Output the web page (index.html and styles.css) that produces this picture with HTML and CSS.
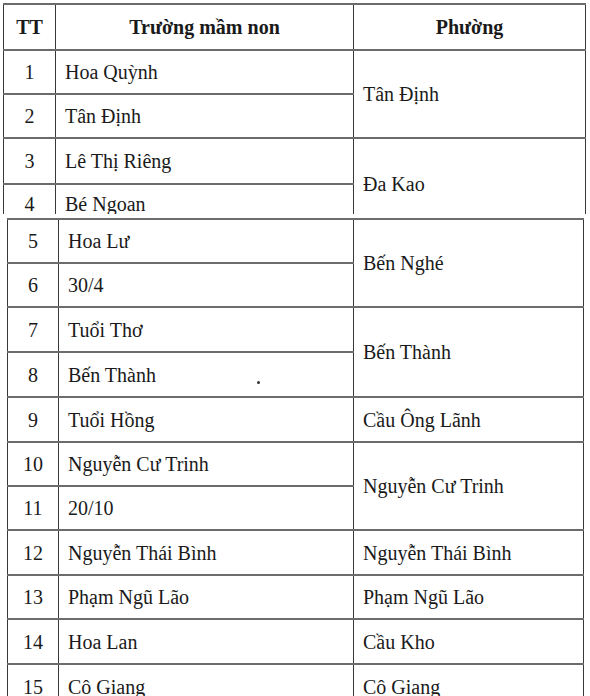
FILE: index.html
```html
<!DOCTYPE html>
<html lang="vi">
<head>
<meta charset="utf-8">
<title>Danh sách trường mầm non</title>
<link rel="stylesheet" href="styles.css">
</head>
<body>
<div class="page">
  <div class="piece piece-top">
    <table class="grid grid-top">
      <colgroup>
        <col class="c-tt-top">
        <col class="c-name-top">
        <col class="c-ward-top">
      </colgroup>
      <tr class="head">
        <th>TT</th>
        <th>Trường mầm non</th>
        <th>Phường</th>
      </tr>
      <tr class="r44">
        <td class="num">1</td>
        <td>Hoa Quỳnh</td>
        <td rowspan="2">Tân Định</td>
      </tr>
      <tr class="r44">
        <td class="num">2</td>
        <td>Tân Định</td>
      </tr>
      <tr class="r46">
        <td class="num">3</td>
        <td>Lê Thị Riêng</td>
        <td rowspan="2">Đa Kao</td>
      </tr>
      <tr class="r46 cut-row">
        <td class="num">4</td>
        <td>Bé Ngoan</td>
      </tr>
    </table>
  </div>
  <div class="piece piece-bottom">
    <table class="grid grid-bottom">
      <colgroup>
        <col class="c-tt-bot">
        <col class="c-name-bot">
        <col class="c-ward-bot">
      </colgroup>
      <tr class="r44">
        <td class="num">5</td>
        <td>Hoa Lư</td>
        <td rowspan="2">Bến Nghé</td>
      </tr>
      <tr class="r44">
        <td class="num">6</td>
        <td>30/4</td>
      </tr>
      <tr class="r45">
        <td class="num">7</td>
        <td>Tuổi Thơ</td>
        <td rowspan="2">Bến Thành</td>
      </tr>
      <tr class="r45">
        <td class="num">8</td>
        <td class="speck-cell">Bến Thành<span class="speck"></span></td>
      </tr>
      <tr class="r45">
        <td class="num">9</td>
        <td>Tuổi Hồng</td>
        <td>Cầu Ông Lãnh</td>
      </tr>
      <tr class="r44">
        <td class="num">10</td>
        <td>Nguyễn Cư Trinh</td>
        <td rowspan="2">Nguyễn Cư Trinh</td>
      </tr>
      <tr class="r44">
        <td class="num">11</td>
        <td>20/10</td>
      </tr>
      <tr class="r45">
        <td class="num">12</td>
        <td>Nguyễn Thái Bình</td>
        <td>Nguyễn Thái Bình</td>
      </tr>
      <tr class="r44">
        <td class="num">13</td>
        <td>Phạm Ngũ Lão</td>
        <td>Phạm Ngũ Lão</td>
      </tr>
      <tr class="r45">
        <td class="num">14</td>
        <td>Hoa Lan</td>
        <td>Cầu Kho</td>
      </tr>
      <tr class="r45">
        <td class="num">15</td>
        <td>Cô Giang</td>
        <td>Cô Giang</td>
      </tr>
    </table>
  </div>
</div>
</body>
</html>
```

FILE: styles.css
```css
html, body {
  margin: 0;
  padding: 0;
  background: #ffffff;
}

.page {
  width: 590px;
  height: 696px;
  overflow: hidden;
  font-family: "Liberation Serif", "Times New Roman", serif;
  font-size: 20px;
  color: #1a1a1a;
}

.piece {
  overflow: hidden;
}

.piece-top {
  height: 214px;
  padding: 3px 0 0 3px;
  box-sizing: border-box;
}

.piece-bottom {
  padding: 4px 0 0 7px;
}

.grid {
  border-collapse: collapse;
  table-layout: fixed;
}

.grid-top { width: 582px; }
.grid-bottom { width: 576px; }

.c-tt-top { width: 52px; }
.c-name-top { width: 298px; }
.c-ward-top { width: 232px; }

.c-tt-bot { width: 51px; }
.c-name-bot { width: 295px; }
.c-ward-bot { width: 230px; }

.grid th,
.grid td {
  border-left: 1px solid #383838;
  border-right: 1px solid #383838;
  border-top: 2px solid #6c6c6c;
  border-bottom: 2px solid #6c6c6c;
  padding: 0 0 0 9px;
  text-align: left;
  vertical-align: middle;
  line-height: 22px;
  white-space: nowrap;
}

.grid th {
  font-weight: bold;
  text-align: center;
  padding: 0;
  height: 44px;
}

.grid td.num {
  text-align: center;
  padding: 0;
}

.grid .cut-row td {
  padding-bottom: 6px;
}

.head { height: 46px; }
.r44 { height: 44px; }
.r45 { height: 45px; }
.r46 { height: 46px; }

.speck-cell {
  position: relative;
}

.speck {
  position: absolute;
  left: 198px;
  top: 28px;
  width: 3px;
  height: 3px;
  border-radius: 50%;
  background: #333;
}
```
